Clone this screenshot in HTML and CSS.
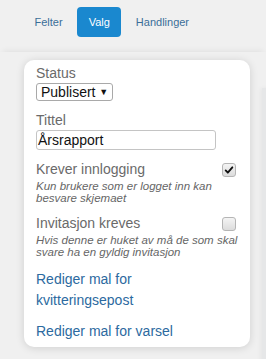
FILE: index.html
```html
<!DOCTYPE html>
<html lang="no">
<head>
<meta charset="utf-8">
<link rel="stylesheet" href="styles.css">
</head>
<body>
<nav class="tabs">
  <a class="tab">Felter</a>
  <a class="tab active">Valg</a>
  <a class="tab">Handlinger</a>
</nav>
<main class="panel">
  <div class="side"></div>
  <section class="card">
    <div class="field">
      <div class="label">Status</div>
      <div class="select">Publisert <span class="caret">▼</span></div>
    </div>
    <div class="field">
      <div class="label">Tittel</div>
      <div class="input">Årsrapport</div>
    </div>
    <div class="field check-field">
      <div class="row">
        <div class="label">Krever innlogging</div>
        <span class="checkbox checked">
          <svg viewBox="0 0 12 12" width="10" height="10"><path d="M2 6.5 L4.6 9.2 L10 2.8" fill="none" stroke="#111" stroke-width="2.2" stroke-linecap="round" stroke-linejoin="round"/></svg>
        </span>
      </div>
      <div class="desc">Kun brukere som er logget inn kan besvare skjemaet</div>
    </div>
    <div class="field check-field">
      <div class="row">
        <div class="label">Invitasjon kreves</div>
        <span class="checkbox"></span>
      </div>
      <div class="desc">Hvis denne er huket av må de som skal svare ha en gyldig invitasjon</div>
    </div>
    <div class="links">
      <a class="link">Rediger mal for kvitteringsepost</a>
      <a class="link">Rediger mal for varsel</a>
    </div>
  </section>
</main>
</body>
</html>
```

FILE: styles.css
```css
html, body {
  margin: 0;
  padding: 0;
}
body {
  background: #f0f0f0;
  font-family: "Liberation Sans", Arial, sans-serif;
  width: 266px;
  height: 359px;
  overflow: hidden;
}
.tabs {
  display: flex;
  gap: 3px;
  padding: 7px 0 0 23px;
  height: 45px;
}
.tab {
  display: block;
  height: 30px;
  line-height: 30px;
  padding: 0 11.5px;
  font-size: 11px;
  color: #3a6e98;
  border-radius: 4px;
}
.tab.active {
  background: #1a88cf;
  color: #fff;
}
.panel {
  position: relative;
  padding: 8px 0 12px 24px;
  box-shadow: 0 -4px 6px -3px rgba(0,0,0,0.07);
  min-height: 300px;
}
.side {
  position: absolute;
  left: 262px;
  top: 36px;
  width: 10px;
  bottom: 0;
  background: #e6e7e8;
  box-shadow: -2px 0 4px rgba(0,0,0,0.04);
}
.card {
  position: relative;
  width: 201px;
  background: #fff;
  border-radius: 10px;
  box-shadow: 0 1px 8px rgba(0,0,0,0.14);
  padding: 5px 13px 5px 12px;
}
.field {
  margin-bottom: 11px;
}
.label {
  font-size: 14px;
  line-height: 16px;
  color: #6a6a6a;
}
.select {
  display: inline-block;
  margin-top: 2px;
  border: 1px solid #a9a9a9;
  border-radius: 3px;
  padding: 0 4px 0 4px;
  font-size: 14px;
  line-height: 16px;
  color: #111;
}
.caret {
  font-size: 9px;
  vertical-align: 2px;
}
.input {
  margin-top: 2px;
  width: 177px;
  border: 1px solid #c4c4c4;
  border-radius: 3px;
  padding: 0 0 0 1px;
  font-size: 14px;
  line-height: 18px;
  color: #111;
  box-sizing: content-box;
}
.check-field {
  margin-bottom: 11px;
}
.row {
  display: flex;
  justify-content: space-between;
  align-items: flex-start;
}
.checkbox {
  display: flex;
  align-items: center;
  justify-content: center;
  width: 12px;
  height: 12px;
  margin-top: 2px;
  margin-right: 1px;
  border: 1px solid #b5b5b5;
  border-radius: 3px;
  background: linear-gradient(#f4f4f4, #dcdcdc);
}
.desc {
  margin-top: 3px;
  margin-right: -4px;
  font-size: 11.5px;
  line-height: 12px;
  font-style: italic;
  color: #666;
}
.links {
  display: flex;
  flex-direction: column;
  gap: 10px;
  margin-top: 1px;
  padding-right: 8px;
}
.link {
  font-size: 14px;
  line-height: 21px;
  color: #2c6aa0;
}
```
